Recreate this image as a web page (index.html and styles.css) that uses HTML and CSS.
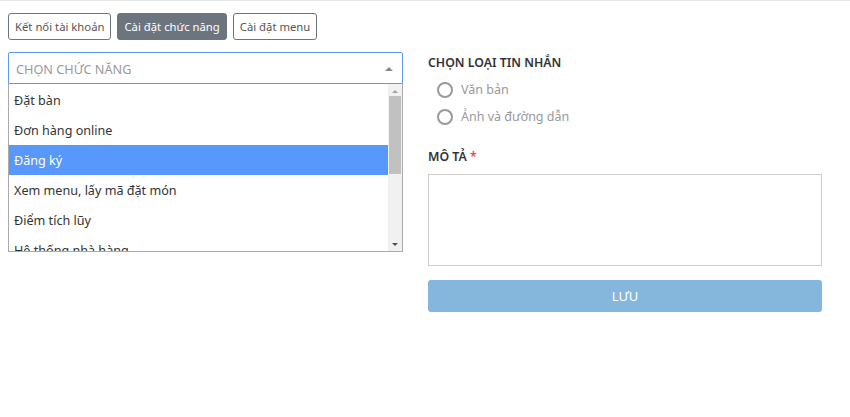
FILE: index.html
```html
<!DOCTYPE html>
<html lang="vi">
<head>
<meta charset="utf-8">
<link rel="stylesheet" href="styles.css">
</head>
<body>
<div class="page">
  <div class="tabs">
    <button class="tab">Kết nối tài khoản</button>
    <button class="tab active">Cài đặt chức năng</button>
    <button class="tab">Cài đặt menu</button>
  </div>
  <div class="grid">
    <div class="left">
      <div class="select">
        <span class="placeholder">CHỌN CHỨC NĂNG</span>
        <span class="caret"></span>
      </div>
      <div class="dropdown">
        <ul class="options">
          <li>Đặt bàn</li>
          <li>Đơn hàng online</li>
          <li class="hl">Đăng ký</li>
          <li>Xem menu, lấy mã đặt món</li>
          <li>Điểm tích lũy</li>
          <li>Hệ thống nhà hàng</li>
        </ul>
        <div class="scrollbar">
          <span class="arrow up"></span>
          <div class="thumb"></div>
          <div class="track"></div>
          <span class="arrow down"></span>
        </div>
      </div>
    </div>
    <div class="right">
      <div class="label first">CHỌN LOẠI TIN NHẮN</div>
      <label class="radio"><span class="circle"></span>Văn bản</label>
      <label class="radio"><span class="circle"></span>Ảnh và đường dẫn</label>
      <div class="label desc">MÔ TẢ <span class="req">*</span></div>
      <div class="textarea"></div>
      <button class="save">LƯU</button>
    </div>
  </div>
</div>
</body>
</html>
```
FILE: styles.css
```css
* { box-sizing: border-box; }
html, body { margin: 0; padding: 0; background: #fff; }
body {
  font-family: "Noto Sans", "Open Sans", sans-serif;
  font-size: 13px;
  color: #333;
}
.page {
  border-top: 1px solid #e6e6e6;
  padding: 12px 8px 0 8px;
  height: 417px;
}
.tabs { display: flex; gap: 6px; }
.tab {
  font-family: inherit;
  font-size: 11.3px;
  height: 27px;
  padding: 0 6px;
  background: #fff;
  color: #555;
  border: 1px solid #6c757d;
  border-radius: 3px;
  line-height: 25px;
}
.tab.active { background: #6c757d; color: #fff; }
.grid {
  display: grid;
  grid-template-columns: 395px 394px;
  column-gap: 25px;
  margin-top: 12px;
}
.select {
  height: 32px;
  border: 1px solid #5b9bf0;
  display: flex;
  align-items: center;
  justify-content: space-between;
  padding: 1px 9px 0 7px;
  border-radius: 2px 2px 0 0;
}
.placeholder { color: #999; font-size: 12.7px; }
.caret {
  width: 0; height: 0;
  border-left: 4px solid transparent;
  border-right: 4px solid transparent;
  border-bottom: 4px solid #888;
}
.dropdown {
  display: flex;
  height: 168px;
  border: 1px solid #aaa;
  border-top: none;
  overflow: hidden;
}
.options {
  list-style: none;
  margin: 0;
  padding: 1px 0 0;
  flex: 1;
}
.options li {
  height: 30px;
  line-height: 31px;
  padding-left: 5px;
  font-size: 12.6px;
  color: #333;
  white-space: nowrap;
}
.options li.hl { background: #5897fb; color: #fff; }
.scrollbar {
  width: 14px;
  background: #f1f1f1;
  display: flex;
  flex-direction: column;
  align-items: center;
}
.arrow {
  width: 0; height: 0;
  border-left: 3.5px solid transparent;
  border-right: 3.5px solid transparent;
}
.arrow.up { border-bottom: 3.5px solid #a3a3a3; margin: 6px 0 3px; }
.arrow.down { border-top: 3.5px solid #505050; margin: 0 0 5px; }
.thumb { width: 12px; height: 78px; background: #c1c1c1; }
.track { flex: 1; }
.label { font-weight: 600; font-size: 12.3px; color: #333; height: 18px; line-height: 18px; }
.label.first { margin-top: 2px; }
.radio {
  display: flex;
  align-items: center;
  height: 27px;
  padding-left: 9px;
  color: #999;
  font-size: 12.5px;
}
.radio:first-of-type { margin-top: 4px; }
.circle {
  width: 16px; height: 16px;
  border: 2px solid #999;
  border-radius: 50%;
  margin-right: 8px;
}
.desc { margin-top: 18px; }
.req { color: #e5484d; }
.textarea {
  margin-top: 8px;
  height: 92px;
  border: 1px solid #ccc;
}
.save {
  margin-top: 14px;
  width: 100%;
  height: 32px;
  background: #85b6dc;
  border: none;
  border-radius: 3px;
  color: #fff;
  font-family: inherit;
  font-size: 13px;
}
```
